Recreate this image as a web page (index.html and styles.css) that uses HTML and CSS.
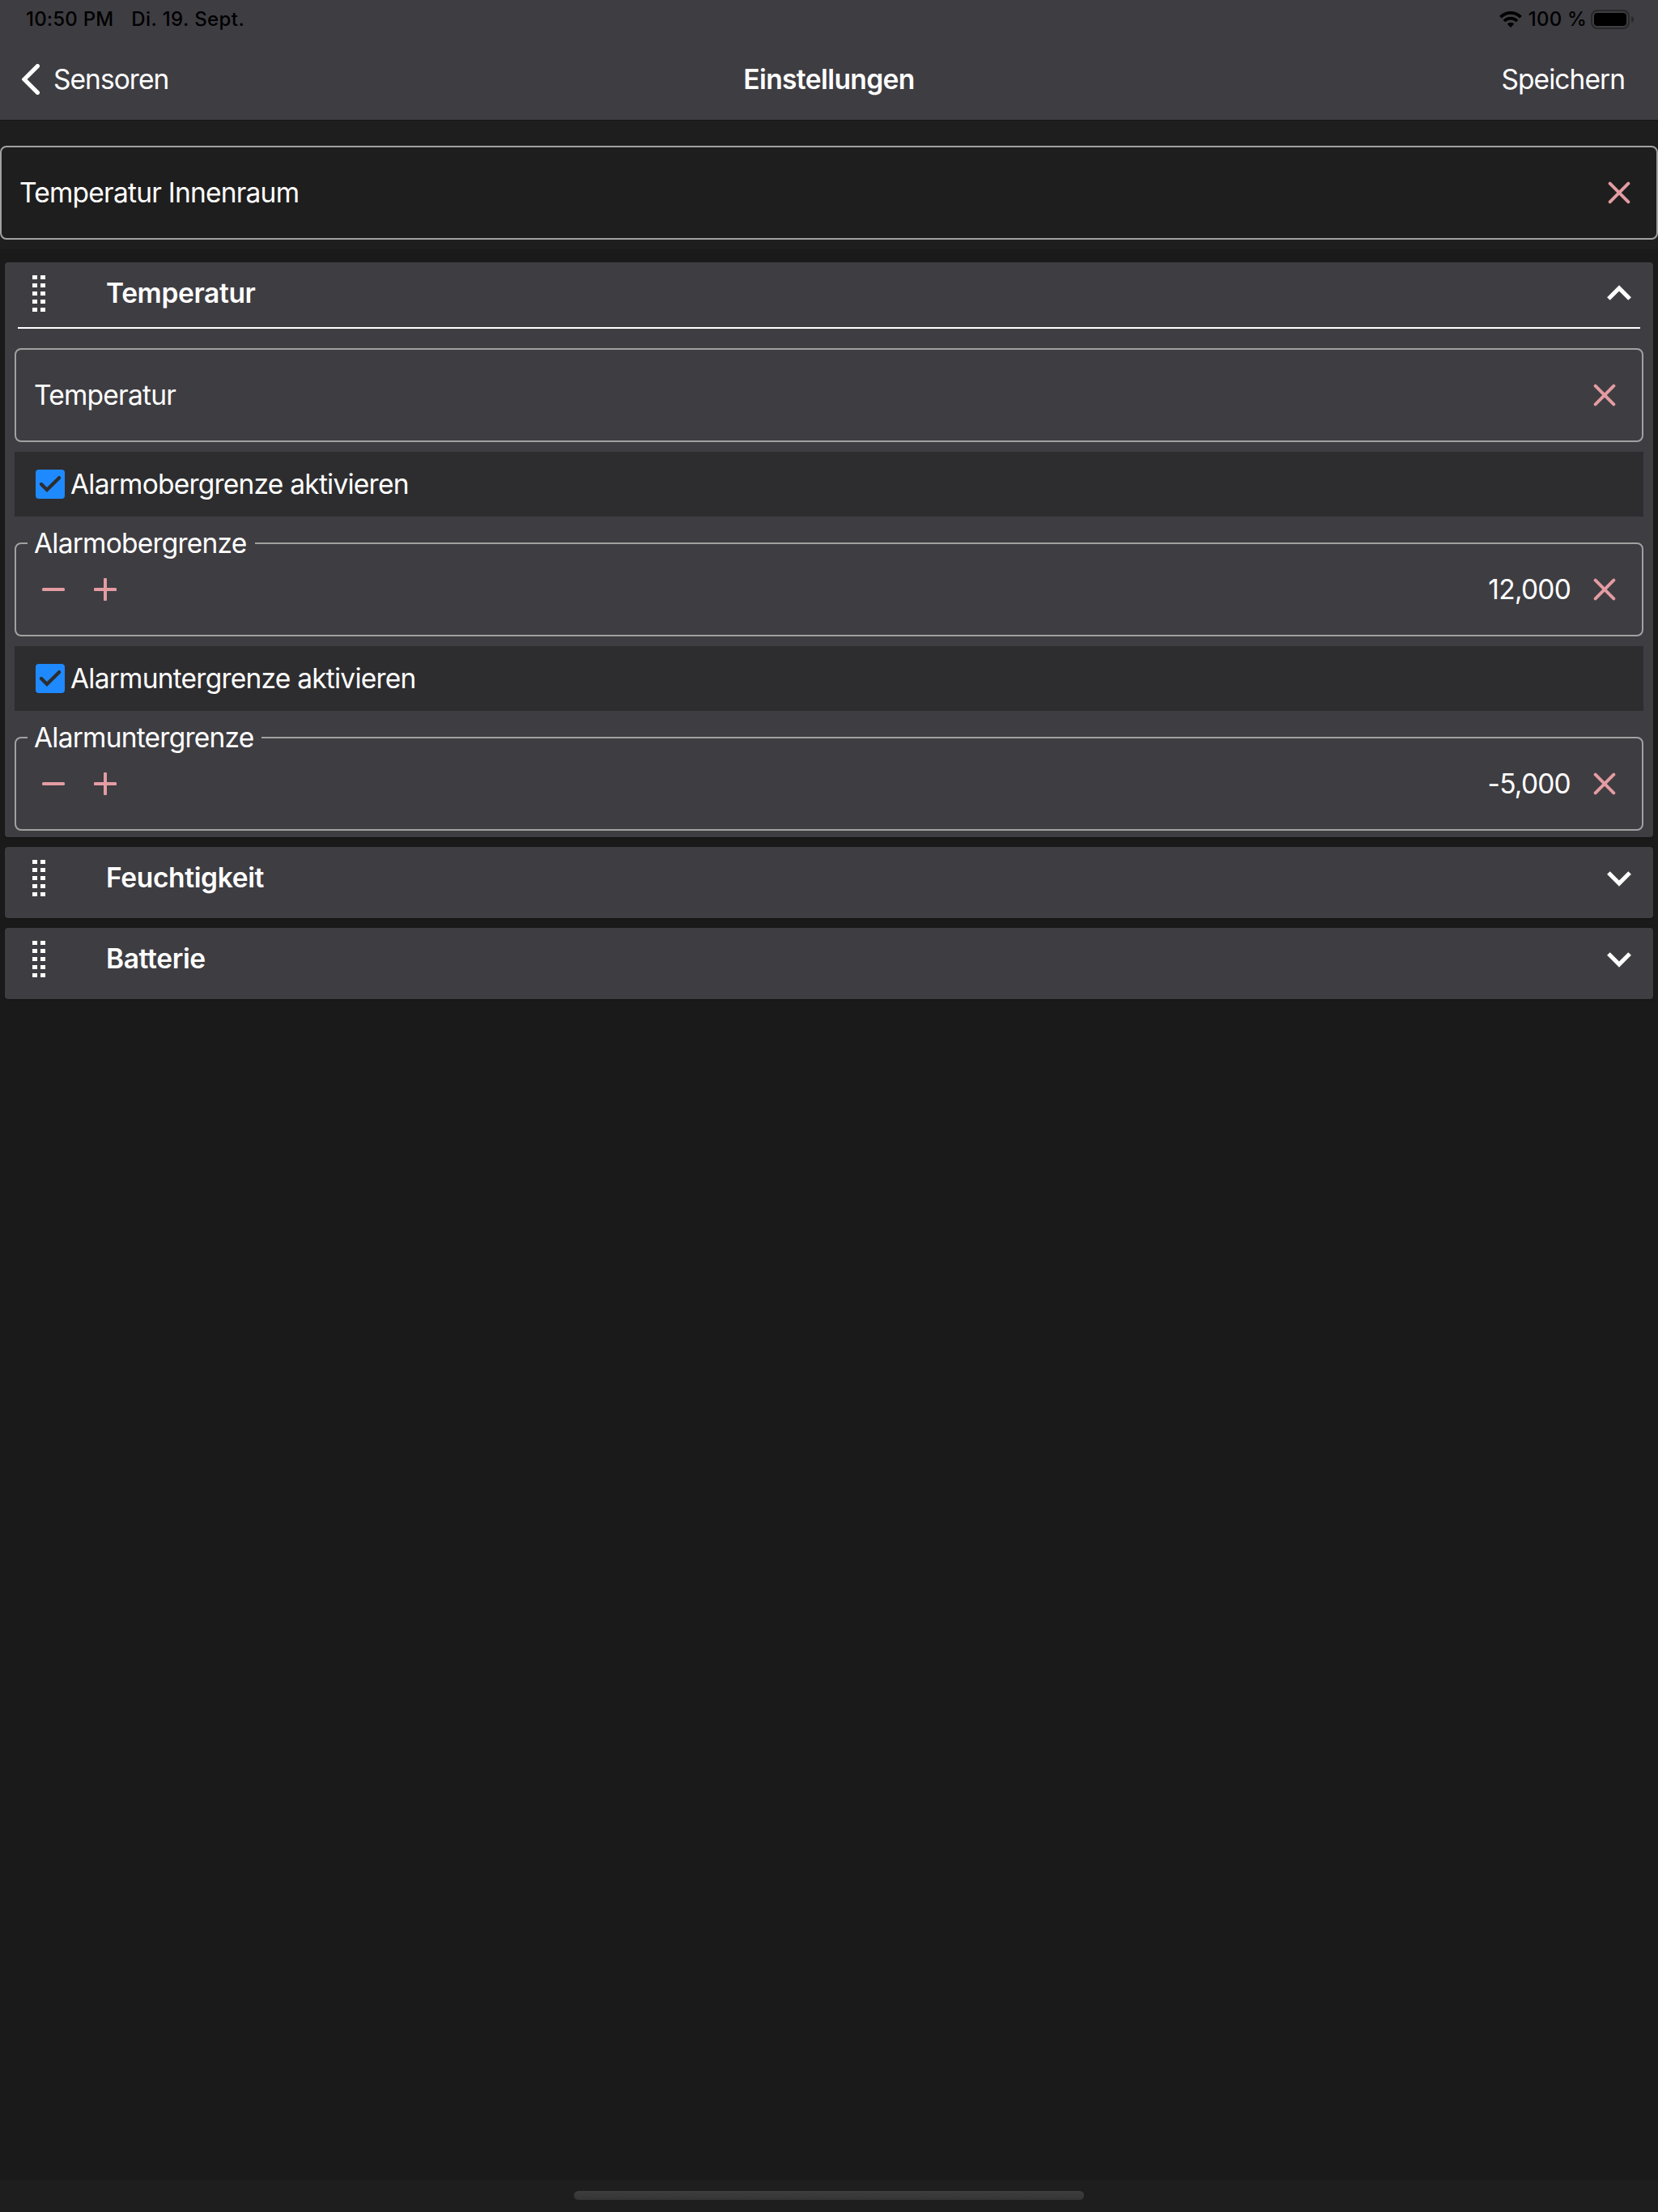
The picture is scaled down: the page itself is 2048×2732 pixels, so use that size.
FILE: index.html
```
<!DOCTYPE html>
<html lang="de">

<head>
  <meta charset="UTF-8">
  <meta name="viewport" content="width=device-width, initial-scale=1.0">
  <title>Einstellungen</title>
  <link rel="stylesheet" href="styles.css">
</head>

<body>
  <!-- Icons -->
  <svg class="sprite" width="0" height="0">
    <symbol id="icon-clear" viewBox="0 0 28 28">
      <path d="M2.7 2.7L25.3 25.3M25.3 2.7L2.7 25.3" fill="none" stroke="currentColor" stroke-width="4" stroke-linecap="round"/>
    </symbol>
    <symbol id="icon-minus" viewBox="0 0 28 28">
      <rect x="0" y="12" width="28" height="4" rx="1.5" fill="currentColor"/>
    </symbol>
    <symbol id="icon-plus" viewBox="0 0 28 28">
      <path d="M1.5 12H12V1.5A1.5 1.5 0 0 1 16 1.5V12H26.5A1.5 1.5 0 0 1 26.5 16H16V26.5A1.5 1.5 0 0 1 12 26.5V16H1.5A1.5 1.5 0 0 1 1.5 12Z" fill="currentColor"/>
    </symbol>
    <symbol id="icon-grip" viewBox="0 0 16 45">
      <path d="M0 0H6V5H0ZM10 0H16V5H10ZM0 10H6V15H0ZM10 10H16V15H10ZM0 20H6V25H0ZM10 20H16V25H10ZM0 30H6V35H0ZM10 30H16V35H10ZM0 40H6V45H0ZM10 40H16V45H10Z" fill="currentColor"/>
    </symbol>
    <symbol id="icon-chevron" viewBox="0 0 30 19">
      <path d="M1.9 2L15 15.1L28.1 2" fill="none" stroke="currentColor" stroke-width="5.2"/>
    </symbol>
    <symbol id="icon-check" viewBox="0 0 36 36">
      <path d="M7 18L14 25L29 10.2" fill="none" stroke="currentColor" stroke-width="4.4" stroke-linecap="round"/>
    </symbol>
  </svg>

  <header class="header">
    <div class="status">
      <span class="time">10:50 PM</span>
      <span class="date">Di. 19. Sept.</span>
      <svg class="wifi" width="28" height="20" viewBox="0 0 28 20">
        <path d="M1.5 7.2A17.5 17.5 0 0 1 26.5 7.2" fill="none" stroke="#000" stroke-width="3.8"/>
        <path d="M6 12A11 11 0 0 1 22 12" fill="none" stroke="#000" stroke-width="3.7"/>
        <path d="M14 20L9.7 15.6A6.2 6.2 0 0 1 18.3 15.6Z" fill="#000"/>
      </svg>
      <span class="percent">100 %</span>
      <svg class="battery" width="54" height="24" viewBox="0 0 54 24">
        <rect x="1" y="1" width="46" height="22" rx="7" fill="none" stroke="#28272a" stroke-width="2"/>
        <rect x="4" y="4" width="40" height="16" rx="4" fill="#000"/>
        <path d="M50 8Q53 9 53 12T50 16Z" fill="#28272a"/>
      </svg>
    </div>
    <nav class="navbar">
      <a class="back">
        <svg width="22" height="38" viewBox="0 0 22 38">
          <path d="M19.4 2.6L3 19L19.4 35.4" fill="none" stroke="currentColor" stroke-width="5.2" stroke-linecap="round"/>
        </svg>
        Sensoren
      </a>
      <h1>Einstellungen</h1>
      <a class="save">Speichern</a>
    </nav>
  </header>

  <section class="name">
    <div class="field">
      <span>Temperatur Innenraum</span>
      <svg class="icon"><use href="#icon-clear"/></svg>
    </div>
  </section>

  <main class="cards">
    <section class="card">
      <div class="card-header open">
        <svg class="grip"><use href="#icon-grip"/></svg>
        <h2>Temperatur</h2>
        <svg class="chevron up"><use href="#icon-chevron"/></svg>
      </div>
      <div class="card-body">
        <div class="field">
          <span>Temperatur</span>
          <svg class="icon"><use href="#icon-clear"/></svg>
        </div>

        <div class="check-row">
          <svg class="checkbox"><use href="#icon-check"/></svg>
          <span>Alarmobergrenze aktivieren</span>
        </div>
        <fieldset>
          <legend>Alarmobergrenze</legend>
          <div class="stepper">
            <svg class="step"><use href="#icon-minus"/></svg>
            <svg class="step"><use href="#icon-plus"/></svg>
            <span class="value">12,000</span>
            <svg class="icon"><use href="#icon-clear"/></svg>
          </div>
        </fieldset>

        <div class="check-row">
          <svg class="checkbox"><use href="#icon-check"/></svg>
          <span>Alarmuntergrenze aktivieren</span>
        </div>
        <fieldset>
          <legend>Alarmuntergrenze</legend>
          <div class="stepper">
            <svg class="step"><use href="#icon-minus"/></svg>
            <svg class="step"><use href="#icon-plus"/></svg>
            <span class="value">-5,000</span>
            <svg class="icon"><use href="#icon-clear"/></svg>
          </div>
        </fieldset>
      </div>
    </section>

    <section class="card">
      <div class="card-header">
        <svg class="grip"><use href="#icon-grip"/></svg>
        <h2>Feuchtigkeit</h2>
        <svg class="chevron"><use href="#icon-chevron"/></svg>
      </div>
    </section>

    <section class="card">
      <div class="card-header">
        <svg class="grip"><use href="#icon-grip"/></svg>
        <h2>Batterie</h2>
        <svg class="chevron"><use href="#icon-chevron"/></svg>
      </div>
    </section>
  </main>

  <footer class="footer">
    <div class="home-indicator"></div>
  </footer>
</body>

</html>
```
FILE: styles.css
```
* {
  box-sizing: border-box;
}

body {
  display: flex;
  flex-direction: column;
  height: 2732px;
  margin: 0;
  background-color: #1a1a1a;
  color: #ffffff;
  font-family: Inter, "Liberation Sans", sans-serif;
  font-size: 33.5px;
  line-height: 40px;
  letter-spacing: -0.77px;
  white-space: nowrap;
}

h1,
h2 {
  margin: 0;
  font-size: 33.5px;
  font-weight: 600;
}

svg {
  display: block;
  flex: none;
}

.sprite {
  position: absolute;
}

/* Header */
.header {
  height: 149px;
  background-color: #3e3d42;
  border-bottom: 1px solid #161617;
}

.status {
  display: flex;
  align-items: center;
  height: 48px;
  padding: 0 29px 0 32px;
  color: #000000;
  font-size: 24px;
  font-weight: 500;
  letter-spacing: 0.2px;
}

.date {
  margin-left: 22px;
  letter-spacing: 0.4px;
}

.wifi {
  margin-left: auto;
}

.percent {
  margin: 0 5px 0 8px;
}

.navbar {
  display: grid;
  grid-template-columns: 1fr auto 1fr;
  align-items: center;
  height: 100px;
  padding: 0 41px 0 27px;
  letter-spacing: -0.95px;
}

.navbar h1 {
  margin-left: 14px;
  letter-spacing: -0.58px;
}

.back {
  display: flex;
  align-items: center;
  gap: 17px;
}

.save {
  text-align: right;
}

/* Text fields */
.name {
  height: 159px;
  padding-top: 31px;
  background-color: #1e1e1e;
}

.field {
  display: flex;
  align-items: center;
  justify-content: space-between;
  height: 116px;
  padding: 0 32px 0 22px;
  border: 2px solid #a1a1a1;
  border-radius: 8px;
}

.icon {
  width: 28px;
  height: 28px;
  color: #e39ca2;
}

/* Cards */
.cards {
  display: flex;
  flex: 1;
  flex-direction: column;
  gap: 12px;
  padding: 16px 6px 0;
}

.card {
  background-color: #3e3d42;
  border-radius: 4px;
  box-shadow: 0 1px 2px #141414;
}

.card-header {
  display: flex;
  height: 88px;
  padding: 16px 27px 0 34px;
}

.card-header.open {
  height: 82px;
  margin: 0 16px;
  padding: 16px 11px 0 18px;
  border-bottom: 2px solid #ffffff;
}

.card-header h2 {
  flex: 1;
  margin: 2px 0 0 75px;
  letter-spacing: -0.35px;
}

.grip {
  width: 16px;
  height: 45px;
}

.chevron {
  width: 30px;
  height: 19px;
  margin-top: 14px;
}

.chevron.up {
  margin-top: 12px;
  transform: rotate(180deg);
}

.card-body {
  padding: 24px 12px 8px;
}

.check-row {
  display: flex;
  align-items: center;
  gap: 7px;
  height: 80px;
  margin-top: 12px;
  padding-left: 26px;
  background-color: #2d2d2f;
}

.checkbox {
  width: 36px;
  height: 36px;
  background-color: #1f8aff;
  border-radius: 4px;
  color: #2d2d2f;
}

/* Alarm limits */
fieldset {
  height: 135px;
  min-width: 0;
  margin: 13px 0 0;
  padding: 0 32px 0 14px;
  border: 2px solid #a1a1a1;
  border-radius: 8px;
}

legend {
  height: 40px;
  padding: 0 10px 0 8px;
}

.stepper {
  display: flex;
  align-items: center;
  height: 74px;
  padding-left: 18px;
}

.step {
  width: 28px;
  height: 28px;
  margin-right: 36px;
  color: #e39ca2;
}

.value {
  margin-left: auto;
  margin-right: 28px;
}

/* Bottom bar */
.footer {
  display: flex;
  justify-content: center;
  height: 40px;
  padding-top: 14px;
  background-color: #1e1e1e;
}

.home-indicator {
  width: 630px;
  height: 11px;
  background: linear-gradient(#3d3d3d, #353535);
  border-radius: 6px;
}
```
